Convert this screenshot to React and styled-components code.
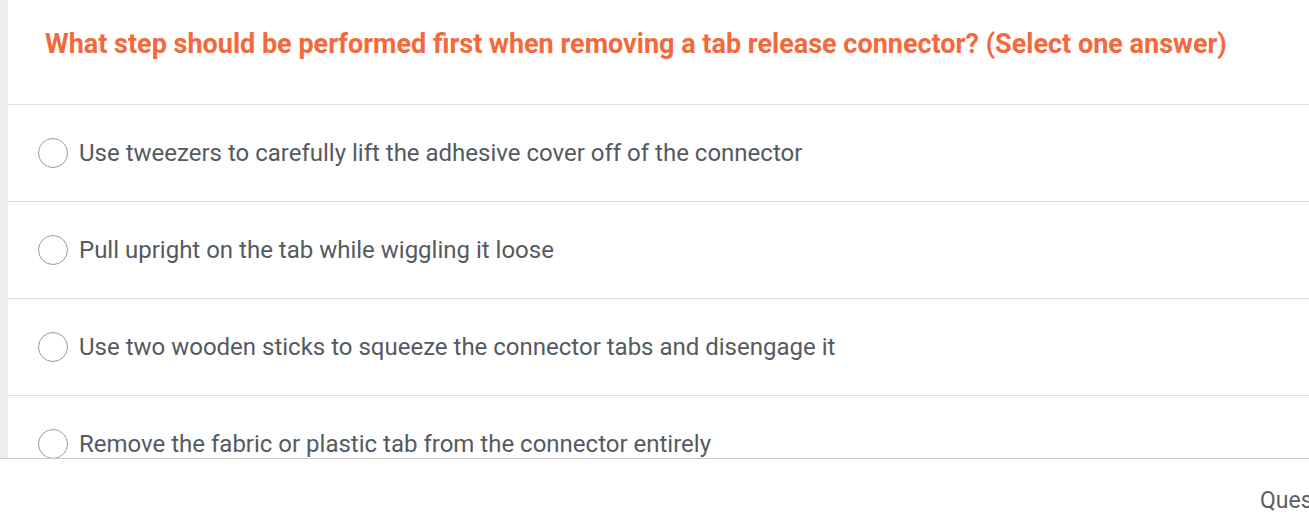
import React from "react";
import styled, { createGlobalStyle } from "styled-components";

const GlobalStyle = createGlobalStyle`
  html, body {
    margin: 0;
    padding: 0;
    background: #ffffff;
    overflow: hidden;
  }
  body {
    font-family: Roboto, "Liberation Sans", Arial, sans-serif;
  }
`;

const Page = styled.div`
  width: 1309px;
  height: 524px;
  display: flex;
  flex-direction: column;
  overflow: hidden;
`;

const Main = styled.div`
  height: 458px;
  display: flex;
  overflow: hidden;
`;

const SideStrip = styled.div`
  width: 8px;
  flex: none;
  background: #eeeeee;
`;

const Card = styled.div`
  flex: 1;
  background: #ffffff;
  overflow: hidden;
`;

const Header = styled.div`
  height: 105px;
  box-sizing: border-box;
  padding: 27px 0 0 37px;
  border-bottom: 1px solid #dddddd;
`;

const Title = styled.h2`
  margin: 0;
  font-size: 27px;
  font-weight: 700;
  line-height: 34px;
  color: #f4693b;
`;

const Option = styled.label`
  height: 97px;
  box-sizing: border-box;
  display: flex;
  align-items: center;
  gap: 11px;
  padding: 0 0 0 30px;
  border-bottom: 1px solid #dddddd;
  cursor: pointer;
`;

const Radio = styled.span`
  width: 28px;
  height: 28px;
  flex: none;
  border: 1px solid #9a9a9a;
  border-radius: 50%;
  background: #ffffff;
`;

const OptionText = styled.span`
  font-size: 24px;
  color: #555a60;
  line-height: 30px;
`;

const Footer = styled.div`
  flex: 1;
  border-top: 1px solid #c8c8c8;
  background: #ffffff;
  display: flex;
  align-items: center;
  padding-left: 1260px;
  white-space: nowrap;
  overflow: hidden;
`;

const FooterText = styled.span`
  font-size: 23px;
  color: #5a5f66;
  margin-top: 18px;
`;

const answers = [
  "Use tweezers to carefully lift the adhesive cover off of the connector",
  "Pull upright on the tab while wiggling it loose",
  "Use two wooden sticks to squeeze the connector tabs and disengage it",
  "Remove the fabric or plastic tab from the connector entirely",
];

export default function App() {
  return (
    <>
      <GlobalStyle />
      <Page>
        <Main>
          <SideStrip />
          <Card>
            <Header>
              <Title>
                What step should be performed first when removing a tab release
                connector? (Select one answer)
              </Title>
            </Header>
            {answers.map((a) => (
              <Option key={a}>
                <Radio />
                <OptionText>{a}</OptionText>
              </Option>
            ))}
          </Card>
        </Main>
        <Footer>
          <FooterText>Question 1 of 10</FooterText>
        </Footer>
      </Page>
    </>
  );
}
